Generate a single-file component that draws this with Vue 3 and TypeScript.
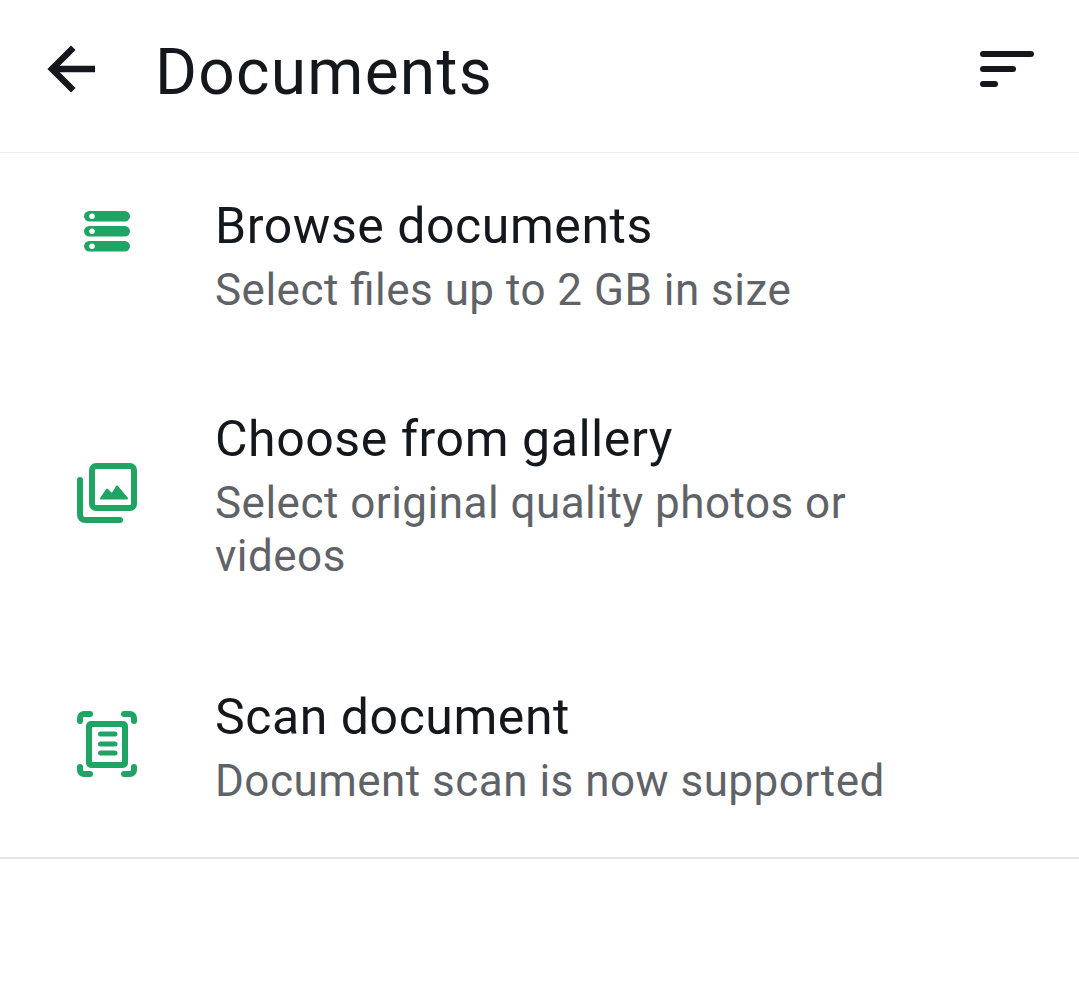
<script setup lang="ts">
const rows = [
  { id: 'browse', title: 'Browse documents', sub: 'Select files up to 2 GB in size' },
  { id: 'gallery', title: 'Choose from gallery', sub: 'Select original quality photos or videos' },
  { id: 'scan', title: 'Scan document', sub: 'Document scan is now supported' }
];
</script>

<template>
  <div class="screen">
    <header class="topbar">
      <svg class="back" width="60" height="60" viewBox="0 0 60 60" fill="none" stroke="#14181c" stroke-width="6.5">
        <path d="M9 29H52" />
        <path d="M30.3 7.7L9 29L30.3 50.3" />
      </svg>
      <h1 class="heading">Documents</h1>
      <svg class="sort" width="56" height="44" viewBox="0 0 56 44" fill="none" stroke="#14181c" stroke-width="6" stroke-linecap="round">
        <path d="M4 7H52" />
        <path d="M4 22H34" />
        <path d="M4 37H16" />
      </svg>
    </header>

    <ul class="list">
      <li v-for="row in rows" :key="row.id" class="row" :class="row.id">
        <div class="icon">
          <svg v-if="row.id === 'browse'" width="60" height="60" viewBox="0 0 60 60">
            <g fill="#1fa463">
              <rect x="7" y="5" width="46" height="10.5" rx="5.25" />
              <rect x="7" y="20" width="46" height="10.5" rx="5.25" />
              <rect x="7" y="35" width="46" height="10.5" rx="5.25" />
            </g>
            <g fill="#fff">
              <circle cx="15" cy="10.25" r="2.8" />
              <circle cx="15" cy="25.25" r="2.8" />
              <circle cx="15" cy="40.25" r="2.8" />
            </g>
          </svg>
          <svg v-else-if="row.id === 'gallery'" width="60" height="60" viewBox="0 0 60 60" fill="none" stroke="#1fa463" stroke-width="6">
            <rect x="15" y="3" width="42" height="42" rx="4" />
            <path d="M3 17V52a5 5 0 0 0 5 5H43" stroke-linecap="round" />
            <path d="M24 35.500L30 26.500L35 31.500L40 23.500L50 35.500Z" fill="#1fa463" stroke="#1fa463" stroke-width="2" stroke-linejoin="round" />
          </svg>
          <svg v-else width="60" height="66" viewBox="0 0 60 66" fill="none" stroke="#1fa463" stroke-width="6">
            <g stroke-linecap="round">
              <path d="M3 10V7a4 4 0 0 1 4-4H13" />
              <path d="M47 3H53a4 4 0 0 1 4 4V10" />
              <path d="M3 56V59a4 4 0 0 0 4 4H13" />
              <path d="M47 63H53a4 4 0 0 0 4-4V56" />
            </g>
            <rect x="12" y="13" width="36" height="41" rx="2" />
            <g stroke-width="5" stroke-linecap="round">
              <path d="M23.500 23H38" />
              <path d="M23.500 33H38" />
              <path d="M23.500 42H38" />
            </g>
          </svg>
        </div>
        <div class="copy">
          <div class="title">{{ row.title }}</div>
          <div class="sub">{{ row.sub }}</div>
        </div>
      </li>
    </ul>
  </div>
</template>

<style>
html,
body {
  background: #fff;
}
</style>

<style scoped>
.screen {
  width: 1079px;
  height: 1003px;
  overflow: hidden;
  background: #fff;
  font-family: Roboto, "Liberation Sans", sans-serif;
}

.topbar {
  display: flex;
  align-items: center;
  height: 153px;
  padding: 0 44px 0 43px;
  box-sizing: border-box;
  border-bottom: 1px solid #ececec;
}

.back {
  flex: none;
  margin-right: 52px;
  margin-top: -12px;
}

.heading {
  flex: 1;
  margin: 0;
  margin-top: -6px;
  font-size: 64px;
  font-weight: 400;
  line-height: 80px;
  letter-spacing: 1.25px;
  color: #14181c;
}

.sort {
  flex: none;
  margin-top: -14px;
}

.list {
  list-style: none;
  margin: 0;
  padding: 0 0 0 77px;
  height: 706px;
  box-sizing: border-box;
  border-bottom: 2px solid #e4e4e4;
}

.row {
  display: flex;
  align-items: flex-start;
}

.browse {
  height: 213px;
  padding-top: 44px;
  box-sizing: border-box;
}

.gallery {
  height: 278px;
  padding-top: 44px;
  box-sizing: border-box;
}

.scan {
  padding-top: 44px;
}

.icon {
  flex: none;
  width: 139px;
  margin-right: -1px;
}

.icon svg {
  display: block;
}

.browse .icon {
  padding-top: 9px;
}

.gallery .icon {
  padding-top: 53px;
}

.scan .icon {
  padding-top: 23px;
}

.copy {
  width: 700px;
}

.title {
  font-size: 50px;
  line-height: 58px;
  letter-spacing: 0.55px;
  color: #14181c;
}

.sub {
  font-size: 44px;
  line-height: 53px;
  letter-spacing: 0.48px;
  font-feature-settings: "liga" 1;
  margin-top: 9px;
  color: #5f6368;
}
</style>
